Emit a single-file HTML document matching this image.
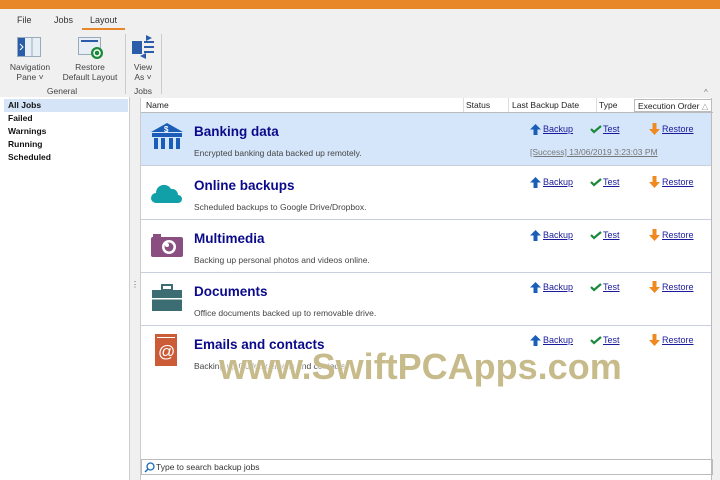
<!DOCTYPE html>
<html><head><meta charset="utf-8"><style>
*{margin:0;padding:0;box-sizing:border-box}
body{width:720px;height:480px;overflow:hidden;background:#f0f0f0;font-family:"Liberation Sans",sans-serif;font-size:9px;color:#222;position:relative}
.a{position:absolute}
.title{left:0;top:0;width:720px;height:9px;background:#e8862a;overflow:hidden}
.tab{top:15px;font-size:9px;color:#333}
.rl{font-size:8.5px;color:#444;text-align:center;line-height:10px}
.left{left:0;top:97px;width:130px;height:383px;background:#fff;border-right:1px solid #ccc}
.left div{font-weight:bold;font-size:8.5px;padding-left:8px;height:13px;line-height:13px;color:#111}
.list{left:140px;top:98px;width:572px;height:382px;background:#fff;border-left:1px solid #ccc;border-right:1px solid #bbb}
.hdr{left:0;top:0;width:572px;height:15px;border-bottom:1px solid #bbb;font-size:8.5px;line-height:14px;color:#222}
.row{left:0;width:570px;height:53px;border-bottom:1px solid #c8d0e0}
.row h3{position:absolute;left:53px;top:11px;font-size:13.5px;color:#0a0a8a;font-weight:bold}
.row p{position:absolute;left:53px;top:35px;font-size:8.5px;color:#444}
.ic{position:absolute;left:10px;top:10px}
</style></head><body>
<div class="a title"></div>
<div class="a tab" style="left:17px">File</div>
<div class="a tab" style="left:54px">Jobs</div>
<div class="a tab" style="left:90px">Layout</div>
<div class="a" style="left:82px;top:28px;width:43px;height:2px;background:#e8862a"></div>
<svg class="a" style="left:17px;top:37px" width="24" height="20"><rect x="0.5" y="0.5" width="23" height="19" fill="#e8eef6" stroke="#9ab"/><rect x="1" y="1" width="7" height="18" fill="#2a5caa"/><path d="M3 7l3 3-3 3" stroke="#fff" fill="none"/><line x1="15" y1="1" x2="15" y2="19" stroke="#9ab"/></svg>
<svg class="a" style="left:78px;top:37px" width="26" height="22"><rect x="0.5" y="0.5" width="22" height="17" fill="#e8eef6" stroke="#9ab"/><rect x="3" y="3" width="17" height="2" fill="#2a5caa"/><circle cx="19" cy="16" r="6" fill="#1a8a3a"/><circle cx="19" cy="16" r="3" fill="none" stroke="#fff" stroke-width="1.5"/></svg>
<svg class="a" style="left:132px;top:35px" width="24" height="24"><rect x="0" y="6" width="10" height="13" fill="#2a5caa"/><rect x="12" y="6" width="10" height="2" fill="#2a5caa"/><rect x="12" y="11" width="10" height="2" fill="#2a5caa"/><rect x="12" y="16" width="10" height="2" fill="#2a5caa"/><path d="M14 0l6 3-6 3z M14 18v6l-6-3z" fill="#2a5caa"/></svg>
<div class="a rl" style="left:6px;top:62px;width:48px">Navigation<br>Pane ˅</div>
<div class="a rl" style="left:60px;top:62px;width:60px">Restore<br>Default Layout</div>
<div class="a rl" style="left:32px;top:86px;width:60px">General</div>
<div class="a rl" style="left:130px;top:62px;width:26px">View<br>As ˅</div>
<div class="a rl" style="left:130px;top:86px;width:26px">Jobs</div>
<div class="a" style="left:125px;top:34px;width:1px;height:60px;background:#ccc"></div>
<div class="a" style="left:161px;top:34px;width:1px;height:60px;background:#ccc"></div>
<div class="a" style="left:704px;top:88px;font-size:8px;color:#777">^</div>
<div class="a left"><div style="background:#d5e4f7;margin:2px 0 0 4px;padding-left:4px;width:124px">All Jobs</div><div>Failed</div><div>Warnings</div><div>Running</div><div>Scheduled</div></div>
<div class="a" style="left:131px;top:280px;font-size:8px;color:#555">⋮</div>
<div class="a list">
<div class="a hdr"><span class="a" style="left:5px">Name</span><span class="a" style="left:322px;border-left:1px solid #ddd;padding-left:2px">Status</span><span class="a" style="left:367px;border-left:1px solid #ddd;padding-left:3px">Last Backup Date</span><span class="a" style="left:455px;border-left:1px solid #ddd;padding-left:2px">Type</span><span class="a" style="left:493px;top:1px;width:78px;height:13px;line-height:12px;border:1px solid #bbb;padding-left:3px;background:#fff">Execution Order <span style="color:#999">△</span></span></div>

<div class="a row" style="top:15px;background:#d5e6fa">
<svg class="ic" width="32" height="28"><path d="M16 0L32 9H0z" fill="#1a5eb8"/><rect x="1" y="10" width="30" height="4" fill="#1a5eb8"/><rect x="3" y="15" width="4" height="11" fill="#1a5eb8"/><rect x="10" y="15" width="4" height="11" fill="#1a5eb8"/><rect x="18" y="15" width="4" height="11" fill="#1a5eb8"/><rect x="25" y="15" width="4" height="11" fill="#1a5eb8"/><text x="13" y="9" fill="#fff" font-size="8" font-weight="bold" font-family="Liberation Sans">$</text></svg>
<h3>Banking data</h3><p>Encrypted banking data backed up remotely.</p>
<span class="a" style="left:389px;top:34px;font-size:8.5px;color:#777;text-decoration:underline">[Success] 13/06/2019 3:23:03 PM</span>
</div>
<div class="a row" style="top:69px"><svg class="ic" width="32" height="24" style="top:14px"><path d="M5 22a5 5 0 0 1 0-10a8 8 0 0 1 15-4a6 6 0 0 1 7 6a4 4 0 0 1 0 8z" fill="#11a0a8"/></svg><h3>Online backups</h3><p>Scheduled backups to Google Drive/Dropbox.</p></div>
<div class="a row" style="top:122px"><svg class="ic" width="32" height="26" style="top:12px"><rect x="0" y="5" width="32" height="20" rx="2" fill="#8a4f80"/><rect x="2" y="2" width="8" height="4" fill="#8a4f80"/><circle cx="18" cy="15" r="7" fill="#fff"/><circle cx="18" cy="15" r="4.5" fill="#8a4f80"/><circle cx="16" cy="13" r="2" fill="#fff"/></svg><h3>Multimedia</h3><p>Backing up personal photos and videos online.</p></div>
<div class="a row" style="top:175px"><svg class="ic" width="32" height="28" style="top:11px"><rect x="11" y="1" width="10" height="5" fill="none" stroke="#3b6d73" stroke-width="2"/><rect x="1" y="6" width="30" height="21" fill="#3b6d73"/><rect x="1" y="14" width="30" height="1.5" fill="#fff"/></svg><h3>Documents</h3><p>Office documents backed up to removable drive.</p></div>
<div class="a row" style="top:228px;border-bottom:none"><svg class="ic" width="24" height="32" style="left:14px;top:8px"><rect x="0" y="0" width="22" height="32" fill="#cc5c38"/><rect x="2" y="3" width="18" height="1" fill="#fff"/><text x="3" y="23" fill="#fff" font-size="17" font-family="Liberation Sans">@</text></svg><h3>Emails and contacts</h3><p>Backing up Outlook emails and contacts.</p></div>

<div class="a" style="left:0;top:361px;width:572px;height:16px;border:1px solid #bbb;font-size:8.5px;line-height:14px;padding-left:14px;color:#333">Type to search backup jobs</div>
<svg class="a" style="left:3px;top:364px" width="11" height="11"><circle cx="6.5" cy="4.5" r="3.5" fill="none" stroke="#1a6ab8" stroke-width="1.3"/><line x1="4" y1="7" x2="1" y2="10" stroke="#1a6ab8" stroke-width="1.5"/></svg>
</div>
<div id="links"></div>
<script>
var L=document.getElementById('links'),tops=[125,178,231,283,336],h='';
tops.forEach(function(t){
h+='<svg class="a" style="left:530px;top:'+(t-1)+'px" width="11" height="11"><path d="M5.5 0L11 5.5H7.5V11h-4V5.5H0z" fill="#1a5eb8"/></svg>';
h+='<span class="a" style="left:543px;top:'+(t-1)+'px;font-size:9px;color:#1a1a9a;text-decoration:underline">Backup</span><span class="a" style="left:603px;top:'+(t-1)+'px;font-size:9px;color:#1a1a9a;text-decoration:underline">Test</span><span class="a" style="left:662px;top:'+(t-1)+'px;font-size:9px;color:#1a1a9a;text-decoration:underline">Restore</span>';
h+='<svg class="a" style="left:590px;top:'+t+'px" width="12" height="9"><path d="M1 4l3 3 7-6" stroke="#1a8a3a" stroke-width="2.2" fill="none"/></svg>';
h+='<svg class="a" style="left:649px;top:'+(t-2)+'px" width="11" height="12"><path d="M3.5 0h4v6H11L5.5 12 0 6h3.5z" fill="#f08a20"/></svg>';
});
L.innerHTML=h;
</script>
<div class="a" style="left:219px;top:346px;font-size:36px;font-weight:bold;color:rgba(185,170,110,0.8);text-shadow:1px 1px 2px #fff,-1px -1px 2px #fff">www.SwiftPCApps.com</div>
</body></html>
